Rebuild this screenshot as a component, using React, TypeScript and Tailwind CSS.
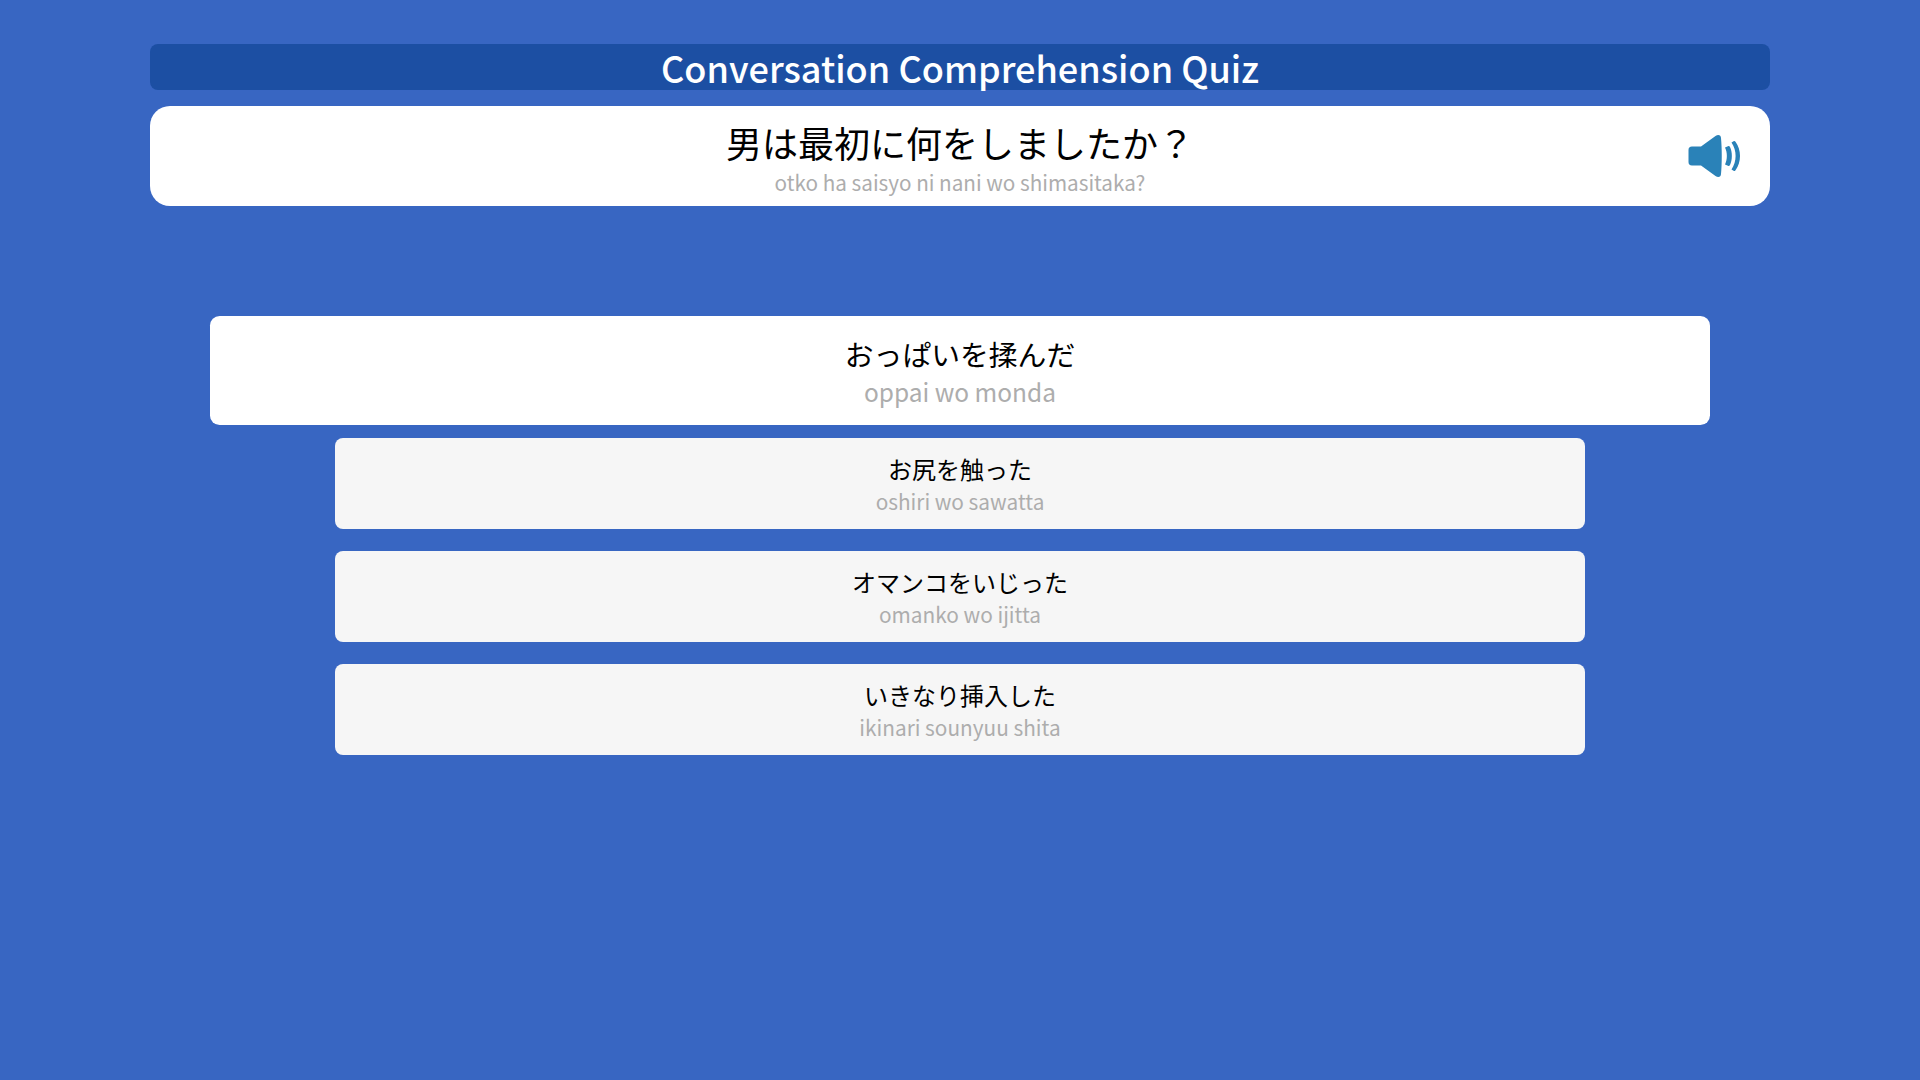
import React from 'react';

const choices = [
    { text: 'おっぱいを揉んだ', reading: 'oppai wo monda', active: true },
    { text: 'お尻を触った', reading: 'oshiri wo sawatta', active: false },
    { text: 'オマンコをいじった', reading: 'omanko wo ijitta', active: false },
    { text: 'いきなり挿入した', reading: 'ikinari sounyuu shita', active: false },
];

const SpeakerIcon: React.FC = () => (
    <svg width="56" height="44" viewBox="0 0 56 44" fill="#2a82b8">
        <path d="M4 12.500 H13 L27.500 2 C30 0.200 33 0.800 33 4 C34 15 34 29 33 40 C33 43.200 30 43.800 27.500 42 L13 31.500 H4 C1.500 31.500 0.500 30 0.500 28 V16 C0.500 14 1.500 12.500 4 12.500 Z" />
        <path d="M37 13.500 L40.500 12 C41 11.800 41.500 12 42 13 C44.500 18 44.500 26 42 31 C41.500 32 41 32.200 40.500 32 L37 30.500 C39.500 25.500 39.500 18.500 37 13.500 Z" />
        <path d="M43.500 8.500 L46 7 C46.500 6.800 47 7 47.500 7.800 C53.500 16 53.500 28 47.500 36.200 C47 37 46.500 37.200 46 37 L43.500 35.500 C49 27 49 17 43.500 8.500 Z" />
    </svg>
);

const App: React.FC = () => {
    return (
        <div className="w-full h-[1080px] bg-[#3866c2] pt-[44px] px-[150px] overflow-hidden font-['Noto_Sans_CJK_JP','Noto_Sans',sans-serif]">
            {/* Title */}
            <div className="h-[46px] bg-[#1c4fa3] rounded-lg flex items-center justify-center">
                <h1 className="text-[36.1px] leading-[46px] text-white font-medium">Conversation Comprehension Quiz</h1>
            </div>

            {/* Question */}
            <div className="relative mt-4 h-[100px] pt-[14px] bg-white rounded-[20px] flex flex-col items-center">
                <div className="text-[36px] leading-[44px] text-black">男は最初に何をしましたか？</div>
                <div className="mt-[4px] text-[20.7px] leading-[28px] text-[#adadad]">otko ha saisyo ni nani wo shimasitaka?</div>
                <div className="absolute right-[26.5px] top-[28px]">
                    <SpeakerIcon />
                </div>
            </div>

            {/* Choices */}
            <div className="mt-[119px] flex flex-col items-center gap-[22px]">
                {choices.map((c) => (
                    <div
                        key={c.reading}
                        className={`w-[1250px] h-[91px] rounded-lg flex flex-col items-center justify-center ${c.active ? 'bg-white scale-[1.2] pt-[1px]' : 'bg-[#f6f6f6]'}`}
                    >
                        <div className="text-[24px] leading-[34px] text-black">{c.text}</div>
                        <div className={`leading-[28px] text-[#adadad] ${c.active ? 'text-[20.4px]' : 'mt-[1px] text-[20.8px]'}`}>{c.reading}</div>
                    </div>
                ))}
            </div>
        </div>
    );
};

export default App;
